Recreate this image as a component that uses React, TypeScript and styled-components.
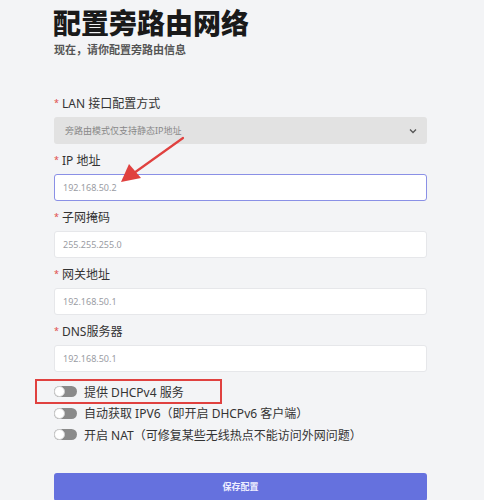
import React from "react";
import styled, { createGlobalStyle } from "styled-components";

const Global = createGlobalStyle`
  html, body { margin: 0; padding: 0; background: #f3f4f6; }
  body { font-family: "Noto Sans", "Noto Sans CJK SC", sans-serif; color: #333; }
`;

const Page = styled.div`
  position: relative;
  width: 484px;
  height: 500px;
  overflow: hidden;
  background: #f3f4f6;
`;

const Container = styled.div`
  margin-left: 54px;
  width: 373px;
  padding-top: 3px;
`;

const Title = styled.h1`
  margin: 0;
  font-family: "Noto Sans CJK SC", sans-serif;
  font-size: 28px;
  font-weight: 900;
  line-height: 38px;
  color: #1a1a1a;
  margin-left: -1px;
`;

const Subtitle = styled.p`
  margin: 1px 0 0;
  font-family: "Noto Sans CJK SC", sans-serif;
  font-size: 11px;
  font-weight: 700;
  line-height: 14px;
  color: #555;
`;

const Form = styled.form`
  margin-top: 40px;
  display: flex;
  flex-direction: column;
  gap: 9px;
`;

const Field = styled.div`
  display: flex;
  flex-direction: column;
  gap: 5px;
`;

const Label = styled.label`
  font-size: 12px;
  line-height: 16px;
  color: #333;
  display: flex;
  align-items: center;
`;

const Star = styled.span`
  color: #e04a4a;
  font-size: 9px;
  margin-right: 3px;
  margin-top: -3px;
`;

const SelectBox = styled.div`
  height: 27px;
  box-sizing: border-box;
  background: #e2e2e2;
  border-radius: 3px;
  display: flex;
  align-items: center;
  justify-content: space-between;
  padding: 0 10px 0 11px;
  font-size: 9px;
  color: #888;
`;

const Input = styled.div<{ $focused?: boolean }>`
  height: 27px;
  box-sizing: border-box;
  background: #fff;
  border: 1px solid ${(p) => (p.$focused ? "#8a90e6" : "#e6e7ea")};
  border-radius: 3px;
  display: flex;
  align-items: center;
  padding: 0 8px;
  font-size: 9px;
  color: #9a9ca3;
`;

const ToggleList = styled.div`
  margin-top: 0;
  display: flex;
  flex-direction: column;
`;

const ToggleRow = styled.div`
  position: relative;
  height: 21.5px;
  display: flex;
  align-items: center;
  gap: 7px;
  font-size: 12px;
  color: #333;
`;

const Track = styled.span`
  position: relative;
  width: 23px;
  height: 11px;
  border-radius: 6px;
  background: #8a8a8a;
  flex-shrink: 0;
`;

const Knob = styled.span`
  position: absolute;
  left: 0;
  top: 0;
  width: 11px;
  height: 11px;
  box-sizing: border-box;
  border-radius: 50%;
  background: #fff;
  border: 1px solid #d0d0d0;
`;

const Highlight = styled.span`
  position: absolute;
  left: -19px;
  top: -2px;
  width: 187px;
  height: 25px;
  box-sizing: border-box;
  border: 2px solid #e0413f;
`;

const Button = styled.button`
  margin-top: 27px;
  width: 373px;
  height: 28px;
  border: none;
  border-radius: 3px;
  background: #6571de;
  color: #eef;
  font-family: "Noto Sans CJK SC", sans-serif;
  font-size: 9px;
  font-weight: 700;
`;

const ArrowSvg = styled.svg`
  position: absolute;
  left: 0;
  top: 0;
  pointer-events: none;
`;

const fields = [
  { label: "IP 地址", value: "192.168.50.2", focused: true },
  { label: "子网掩码", value: "255.255.255.0" },
  { label: "网关地址", value: "192.168.50.1" },
  { label: "DNS服务器", value: "192.168.50.1" },
];

const toggles = [
  "提供 DHCPv4 服务",
  "自动获取 IPV6（即开启 DHCPv6 客户端）",
  "开启 NAT（可修复某些无线热点不能访问外网问题）",
];

export default function App() {
  return (
    <Page>
      <Global />
      <Container>
        <Title>配置旁路由网络</Title>
        <Subtitle>现在，请你配置旁路由信息</Subtitle>
        <Form onSubmit={(e) => e.preventDefault()}>
          <Field>
            <Label>
              <Star>*</Star>LAN 接口配置方式
            </Label>
            <SelectBox>
              <span>旁路由模式仅支持静态IP地址</span>
              <svg width="8" height="6" viewBox="0 0 8 6">
                <path d="M1 1.5 L4 4.5 L7 1.5" fill="none" stroke="#555" strokeWidth="1.3" />
              </svg>
            </SelectBox>
          </Field>
          {fields.map((f) => (
            <Field key={f.label}>
              <Label>
                <Star>*</Star>
                {f.label}
              </Label>
              <Input $focused={f.focused}>{f.value}</Input>
            </Field>
          ))}
          <ToggleList>
            {toggles.map((t, i) => (
              <ToggleRow key={t}>
                <Track>
                  <Knob />
                </Track>
                <span>{t}</span>
                {i === 0 && <Highlight />}
              </ToggleRow>
            ))}
          </ToggleList>
        </Form>
        <Button type="button">保存配置</Button>
      </Container>
      <ArrowSvg width="484" height="500" viewBox="0 0 484 500">
        <line x1="183" y1="138" x2="134" y2="173" stroke="#e0413f" strokeWidth="2.2" strokeLinecap="round" />
        <polygon points="121,182 129,164 141,178" fill="#e0413f" />
      </ArrowSvg>
    </Page>
  );
}
